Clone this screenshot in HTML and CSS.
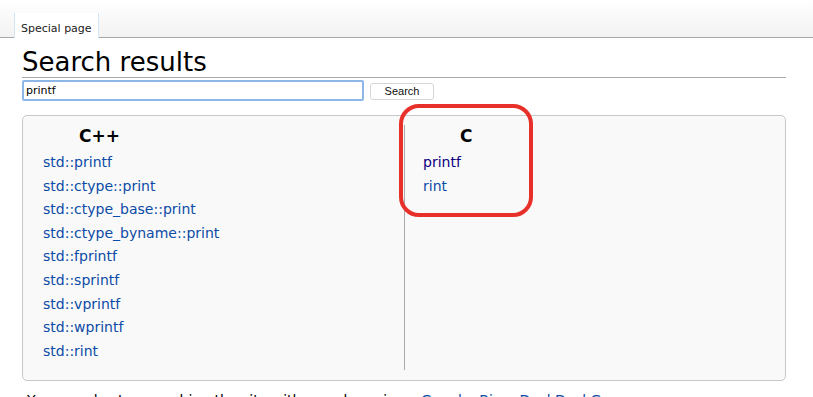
FILE: index.html
```html
<!DOCTYPE html>
<html lang="en">
<head>
  <meta charset="UTF-8" />
  <title>Search results</title>
  <link rel="stylesheet" href="styles.css">
</head>
<body>
  <div class="tabs">
    <span class="tab">Special page</span>
  </div>

  <div class="content">
    <h1>Search results</h1>
    <form class="search-form">
      <input type="text" class="search-input" value="printf" />
      <button type="button" class="search-btn">Search</button>
    </form>

    <div class="results">
      <div class="col col-cpp">
        <div class="col-title">C++</div>
        <a href="#">std::printf</a>
        <a href="#">std::ctype::print</a>
        <a href="#">std::ctype_base::print</a>
        <a href="#">std::ctype_byname::print</a>
        <a href="#">std::fprintf</a>
        <a href="#">std::sprintf</a>
        <a href="#">std::vprintf</a>
        <a href="#">std::wprintf</a>
        <a href="#">std::rint</a>
      </div>
      <div class="col col-c">
        <div class="col-title">C</div>
        <a href="#" class="visited">printf</a>
        <a href="#">rint</a>
        <div class="highlight"></div>
      </div>
    </div>

    <p class="more">You can also try searching the site with search engines: <a href="#">Google</a>, <a href="#">Bing</a>, <a href="#">DuckDuckGo</a></p>
  </div>
</body>
</html>
```

FILE: styles.css
```css
body {
  margin: 0;
  font-family: 'DejaVu Sans', sans-serif;
  color: #000;
  background: #fff;
  overflow: hidden;
}
.tabs {
  height: 37px;
  background: linear-gradient(to bottom, #ffffff, #f2f2f2);
  border-bottom: 1px solid #a7a7a7;
  display: flex;
  align-items: flex-end;
  padding-left: 14px;
}
.tab {
  display: block;
  background: #fff;
  border-left: 1px solid #d3e6f5;
  border-right: 1px solid #d3e6f5;
  font-size: 11px;
  padding: 0 6px 6px 6px;
  height: 25px;
  line-height: 32px;
  box-sizing: border-box;
  margin-bottom: -1px;
  color: #222;
}
.content {
  padding: 0 27px 0 22px;
}
h1 {
  font-weight: normal;
  font-size: 26px;
  margin: 7px 0 0 0;
  line-height: 34px;
  border-bottom: 1px solid #aaa;
  padding-bottom: 0;
  height: 32px;
}
.search-form {
  display: flex;
  align-items: center;
  gap: 6px;
  margin-top: 2px;
}
.search-input {
  width: 342px;
  height: 21px;
  box-sizing: border-box;
  border: 2px solid #8db7e8;
  border-radius: 2px;
  font-family: 'DejaVu Sans', sans-serif;
  font-size: 11px;
  padding: 0 2px;
  outline: none;
}
.search-btn {
  width: 64px;
  height: 17px;
  margin-top: 1px;
  border: 1px solid #d6d6d6;
  border-radius: 3px;
  background: #fff;
  font-family: 'Liberation Sans', sans-serif;
  font-size: 11px;
  padding: 0;
  color: #111;
}
.results {
  margin-top: 14px;
  height: 266px;
  box-sizing: border-box;
  border: 1px solid #c8c8c8;
  border-radius: 5px;
  background: #f9f9f9;
  display: flex;
  padding: 9px 0 10px 0;
}
.col {
  display: flex;
  flex-direction: column;
  font-size: 14px;
}
.col-cpp {
  width: 382px;
  padding-left: 20px;
  box-sizing: border-box;
  border-right: 1px solid #aaa;
}
.col-c {
  position: relative;
  padding-left: 18px;
}
.col-title {
  font-weight: bold;
  font-size: 17px;
  line-height: 22px;
  margin-bottom: 4px;
}
.col-cpp .col-title {
  padding-left: 36px;
}
.col-c .col-title {
  padding-left: 37px;
}
.col a {
  color: #0b4ba6;
  text-decoration: none;
  line-height: 23.6px;
}
.col a.visited {
  color: #0b0080;
}
.highlight {
  position: absolute;
  left: -6px;
  top: -21px;
  width: 126px;
  height: 105px;
  border: 4px solid #e8302a;
  border-radius: 20px;
}
.more {
  font-size: 14px;
  margin: 11px 0 0 5px;
  white-space: nowrap;
}
.more a {
  color: #0b4ba6;
  text-decoration: none;
}
```
